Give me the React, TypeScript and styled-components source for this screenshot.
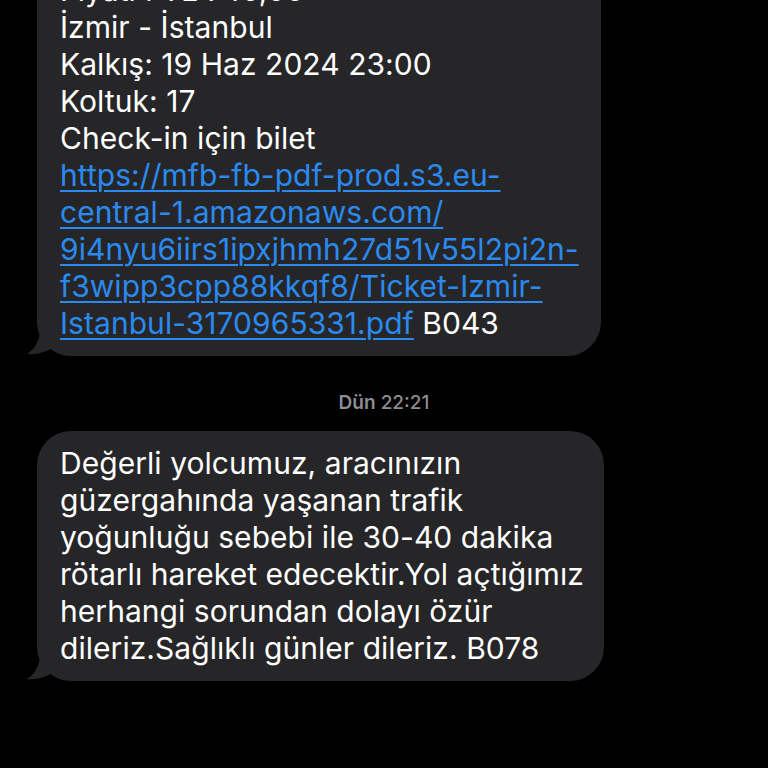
import React from "react";
import styled, { createGlobalStyle } from "styled-components";

const Global = createGlobalStyle`
  html, body { margin: 0; padding: 0; background: #000; }
  body { font-family: Inter, "Noto Sans", sans-serif; -webkit-font-smoothing: antialiased; }
`;

const Screen = styled.div`
  width: 768px;
  height: 768px;
  overflow: hidden;
  background: #000;
`;

const Thread = styled.div`
  display: flex;
  flex-direction: column;
  align-items: flex-start;
  padding-left: 37px;
  margin-top: -42px;
`;

const Bubble = styled.div<{ $w: number }>`
  position: relative;
  isolation: isolate;
  width: ${(p) => p.$w}px;
  box-sizing: border-box;
  background: #262628;
  border-radius: 34px;
  padding: 14px 23px 14px 23px;
  color: #fff;
  font-size: 30px;
  line-height: 37px;
  letter-spacing: 0.05px;
`;

const Tail = styled.svg`
  position: absolute;
  z-index: -1;
  left: -10px;
  bottom: 0;
  width: 32px;
  height: 34px;
`;

const Line = styled.span`
  display: block;
  white-space: nowrap;
`;

const Link = styled.a`
  color: #2a8af0;
  text-decoration: underline;
  text-decoration-thickness: 2px;
  text-underline-offset: 4px;
`;

const Stamp = styled.div`
  align-self: stretch;
  margin-left: -37px;
  text-align: center;
  color: #8d8d92;
  font-size: 19px;
  line-height: 22px;
  font-weight: 500;
  padding: 36px 0 17px;
  b { font-weight: 600; }
`;

const BubbleTail = () => (
  <Tail viewBox="0 0 32 34">
    <path d="M14 0 C14 14 10 26 0 32 C10 33 20 30 28 24 L32 24 L32 0 Z" fill="#262628" />
  </Tail>
);

export default function App() {
  return (
    <Screen>
      <Global />
      <Thread>
        <Bubble $w={564}>
          <BubbleTail />
          <Line>Fiyatı : TL 745,00</Line>
          <Line>İzmir - İstanbul</Line>
          <Line>Kalkış: 19 Haz 2024 23:00</Line>
          <Line>Koltuk: 17</Line>
          <Line>Check-in için bilet</Line>
          <Line><Link>https://mfb-fb-pdf-prod.s3.eu-</Link></Line>
          <Line><Link>central-1.amazonaws.com/</Link></Line>
          <Line><Link>9i4nyu6iirs1ipxjhmh27d51v55l2pi2n-</Link></Line>
          <Line><Link>f3wipp3cpp88kkqf8/Ticket-Izmir-</Link></Line>
          <Line><Link>Istanbul-3170965331.pdf</Link> B043</Line>
        </Bubble>
        <Stamp><b>Dün</b> 22:21</Stamp>
        <Bubble $w={567}>
          <BubbleTail />
          <Line>Değerli yolcumuz, aracınızın</Line>
          <Line>güzergahında yaşanan trafik</Line>
          <Line>yoğunluğu sebebi ile 30-40 dakika</Line>
          <Line>rötarlı hareket edecektir.Yol açtığımız</Line>
          <Line>herhangi sorundan dolayı özür</Line>
          <Line>dileriz.Sağlıklı günler dileriz. B078</Line>
        </Bubble>
      </Thread>
    </Screen>
  );
}
